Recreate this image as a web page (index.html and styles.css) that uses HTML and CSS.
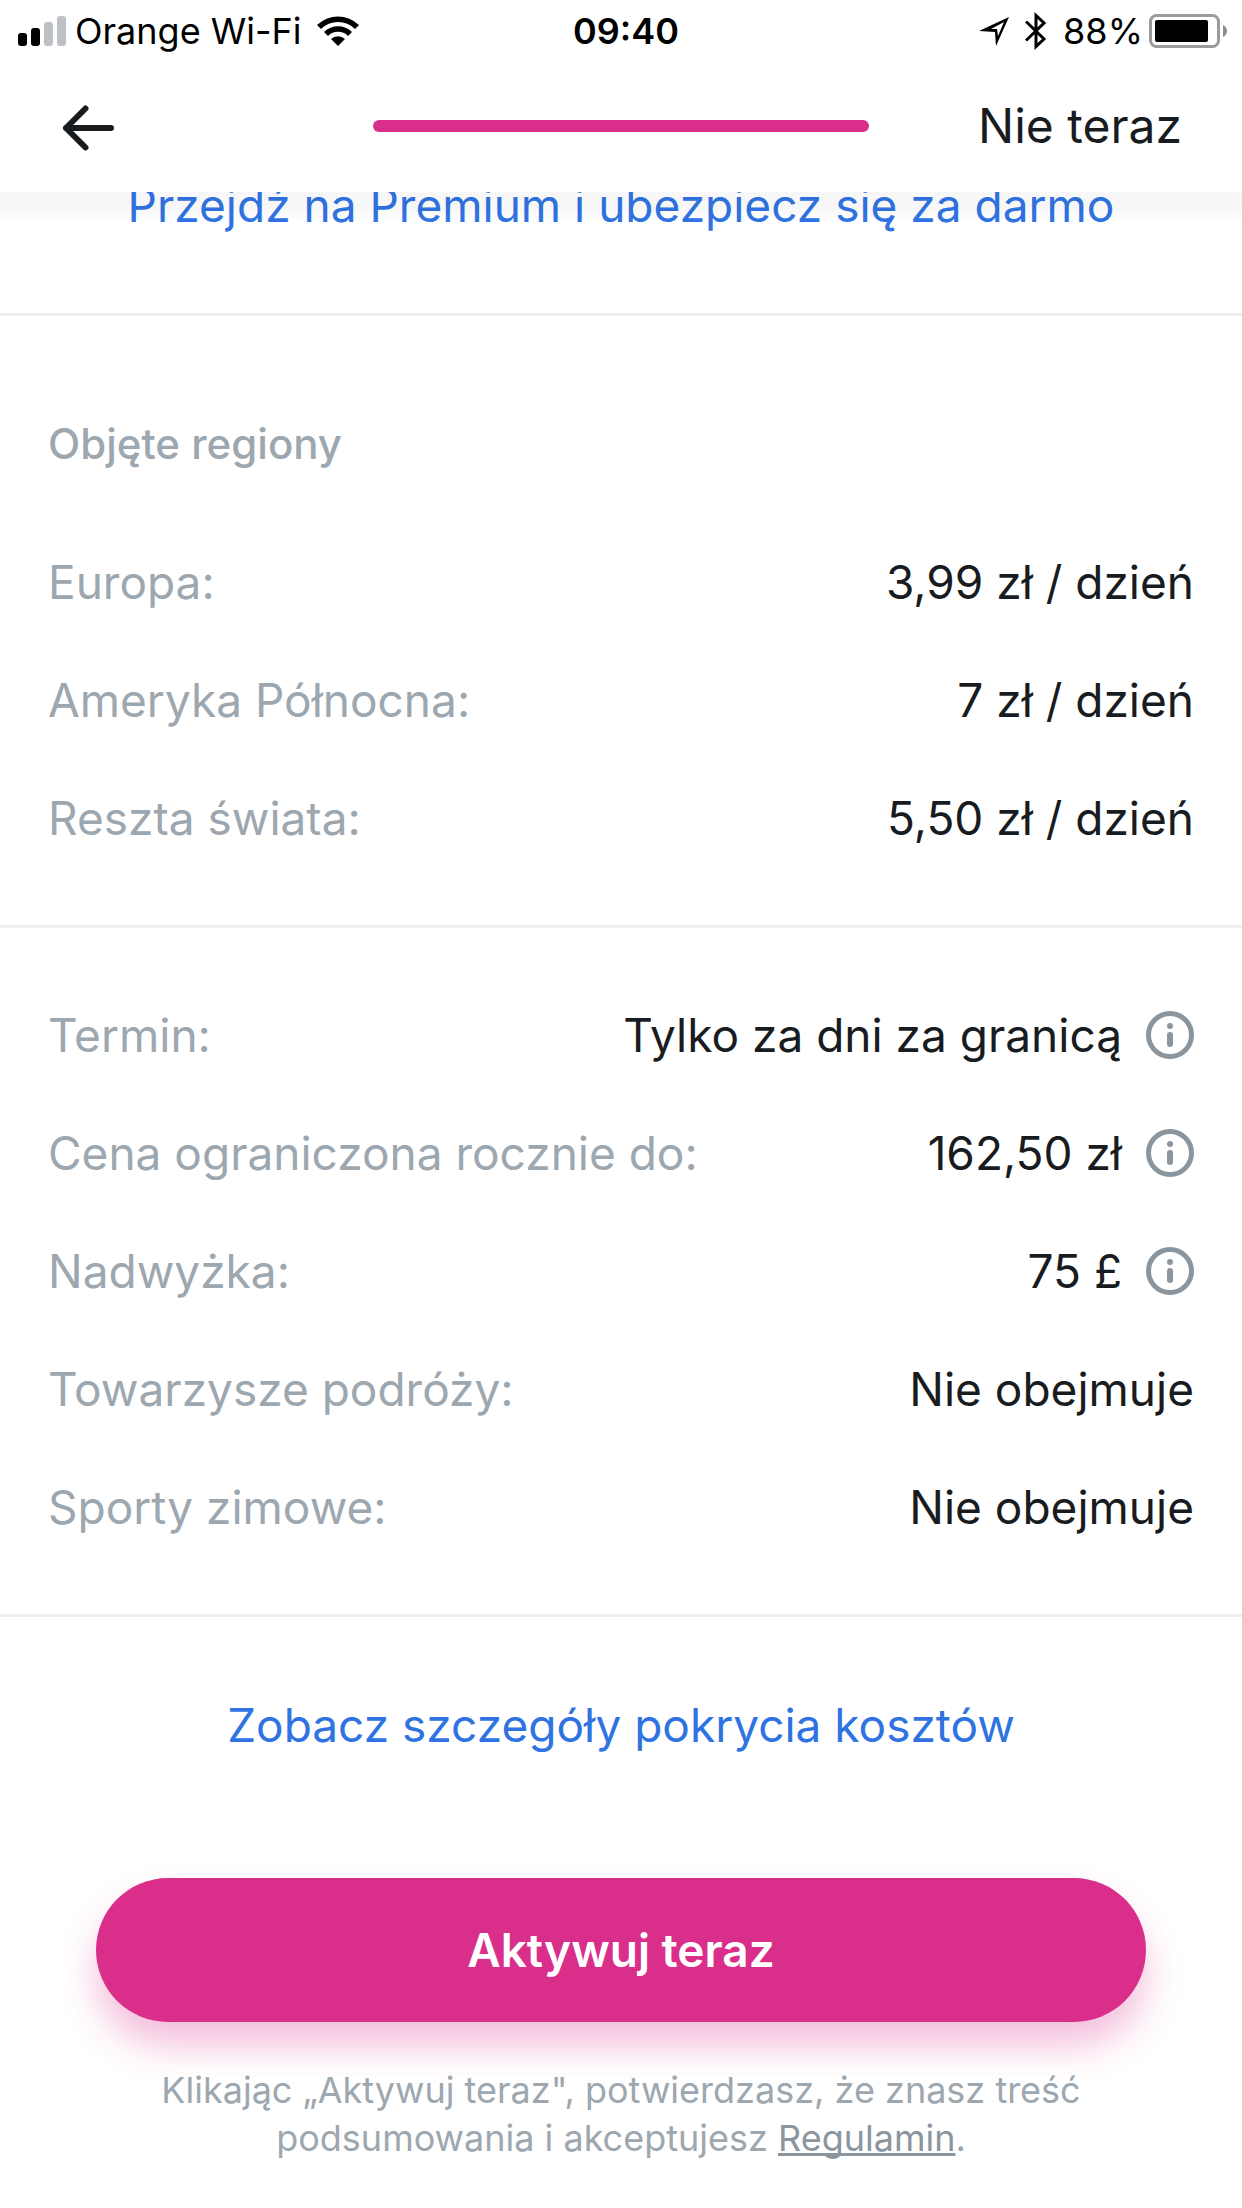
FILE: index.html
```html
<!DOCTYPE html>
<html lang="pl">
<head>
    <meta charset="UTF-8">
    <meta name="viewport" content="width=device-width, initial-scale=1.0">
    <title>Ubezpieczenie</title>
    <link rel="stylesheet" href="styles.css">
</head>
<body>
    <header class="top">
        <div class="status-bar">
            <div class="status-left">
                <svg class="signal" width="48" height="30" viewBox="0 0 48 30" aria-hidden="true">
                    <rect x="0" y="17" width="9" height="13" rx="3"/>
                    <rect x="13" y="12" width="9" height="18" rx="3"/>
                    <rect class="off" x="26" y="6" width="9" height="24" rx="3"/>
                    <rect class="off" x="39" y="0" width="9" height="30" rx="3"/>
                </svg>
                <span class="carrier">Orange Wi-Fi</span>
                <svg class="wifi" width="42" height="30" viewBox="0 0 42 30" aria-hidden="true">
                    <path d="M0 9 A30 30 0 0 1 42 9 L38 13 A24 24 0 0 0 4 13 Z"/>
                    <path d="M7 16 A20 20 0 0 1 35 16 L31 20 A14 14 0 0 0 11 20 Z"/>
                    <path d="M14 23 A10 10 0 0 1 28 23 L21 30 Z"/>
                </svg>
            </div>
            <time class="clock">09:40</time>
            <div class="status-right">
                <svg width="30" height="30" viewBox="0 0 30 30" aria-hidden="true">
                    <path fill-rule="evenodd" d="M0 15 L30 1 L17 30 L16 16 Z M12 13 L18 13 L19 20 L25 6 Z"/>
                </svg>
                <svg class="bluetooth" width="22" height="38" viewBox="0 0 22 38" aria-hidden="true">
                    <path d="M1 9.500 L19 27 L11 34.500 V3.500 L19 11 L1 28.500"/>
                </svg>
                <span class="percent">88%</span>
                <svg width="85" height="34" viewBox="0 0 85 34" aria-hidden="true">
                    <rect class="shell" x="1.500" y="1.500" width="68" height="31" rx="6"/>
                    <rect x="6" y="6" width="53" height="22" rx="2"/>
                    <path class="nub" d="M74 11 Q78 13 78 17 Q78 21 74 23 Z"/>
                </svg>
            </div>
        </div>
        <nav class="nav-bar">
            <button class="back" type="button" aria-label="Wstecz">
                <svg width="52" height="50" viewBox="0 0 52 50" aria-hidden="true">
                    <path d="M49 27 H4 M23.500 7.500 L4 27 L23.500 46.500"/>
                </svg>
            </button>
            <div class="progress"></div>
            <button class="skip" type="button">Nie teraz</button>
        </nav>
    </header>

    <main>
        <section class="promo">
            <a class="link" href="#">Przejdź na Premium i ubezpiecz się za darmo</a>
        </section>

        <section class="details">
            <h2>Objęte regiony</h2>
            <dl>
                <div class="row"><dt>Europa:</dt><dd>3,99 zł / dzień</dd></div>
                <div class="row"><dt>Ameryka Północna:</dt><dd>7 zł / dzień</dd></div>
                <div class="row"><dt>Reszta świata:</dt><dd>5,50 zł / dzień</dd></div>
            </dl>
        </section>

        <section class="details">
            <dl>
                <div class="row">
                    <dt>Termin:</dt>
                    <dd>Tylko za dni za granicą
                        <button class="info" type="button" aria-label="Informacje: termin">
                            <svg width="48" height="48" viewBox="0 0 48 48" aria-hidden="true">
                                <circle class="ring" cx="24" cy="24" r="21.500"/>
                                <circle cx="24" cy="15" r="3"/>
                                <rect x="21" y="21" width="6" height="15" rx="3"/>
                            </svg>
                        </button>
                    </dd>
                </div>
                <div class="row">
                    <dt>Cena ograniczona rocznie do:</dt>
                    <dd>162,50 zł
                        <button class="info" type="button" aria-label="Informacje: cena">
                            <svg width="48" height="48" viewBox="0 0 48 48" aria-hidden="true">
                                <circle class="ring" cx="24" cy="24" r="21.500"/>
                                <circle cx="24" cy="15" r="3"/>
                                <rect x="21" y="21" width="6" height="15" rx="3"/>
                            </svg>
                        </button>
                    </dd>
                </div>
                <div class="row">
                    <dt>Nadwyżka:</dt>
                    <dd>75 £
                        <button class="info" type="button" aria-label="Informacje: nadwyżka">
                            <svg width="48" height="48" viewBox="0 0 48 48" aria-hidden="true">
                                <circle class="ring" cx="24" cy="24" r="21.500"/>
                                <circle cx="24" cy="15" r="3"/>
                                <rect x="21" y="21" width="6" height="15" rx="3"/>
                            </svg>
                        </button>
                    </dd>
                </div>
                <div class="row"><dt>Towarzysze podróży:</dt><dd>Nie obejmuje</dd></div>
                <div class="row"><dt>Sporty zimowe:</dt><dd>Nie obejmuje</dd></div>
            </dl>
        </section>

        <section class="activate">
            <a class="link" href="#">Zobacz szczegóły pokrycia kosztów</a>
            <button class="primary" type="button">Aktywuj teraz</button>
            <p class="terms">Klikając „Aktywuj teraz", potwierdzasz, że znasz treść podsumowania i akceptujesz <a href="#">Regulamin</a>.</p>
        </section>
    </main>
</body>
</html>
```
FILE: styles.css
```css
* {
    box-sizing: border-box;
}

body {
    margin: 0;
    background-color: #fff;
    color: #191c1f;
    font-family: Inter, "Liberation Sans", sans-serif;
    font-size: 46px;
    line-height: 58px;
}

button {
    padding: 0;
    border: none;
    background: none;
    color: inherit;
    font: inherit;
    cursor: pointer;
}

svg {
    display: block;
    flex: none;
}

/* Header */
.top {
    position: sticky;
    top: 0;
    z-index: 1;
    background-color: #fff;
}

.top::after {
    content: "";
    position: absolute;
    top: 100%;
    left: 0;
    right: 0;
    height: 30px;
    background: linear-gradient(rgba(0, 0, 0, 0.03) 50%, rgba(0, 0, 0, 0));
    pointer-events: none;
}

.status-bar {
    display: grid;
    grid-template-columns: 1fr auto 1fr;
    align-items: center;
    height: 62px;
    padding: 0 8px 0 18px;
    color: #000;
    font-size: 36px;
}

.status-left,
.status-right {
    display: flex;
    align-items: center;
}

.status-right {
    justify-content: flex-end;
}

.signal .off {
    fill: #bdc1c6;
}

.carrier {
    margin: 0 16px 0 9px;
}

.clock {
    font-weight: 600;
}

.bluetooth {
    margin: 0 16px;
}

.bluetooth path {
    fill: none;
    stroke: #000;
    stroke-width: 3;
}

.percent {
    margin-right: 6px;
}

.shell {
    fill: none;
    stroke: #9b9b9e;
    stroke-width: 3;
}

.nub {
    fill: #8c8c8f;
}

.nav-bar {
    display: grid;
    grid-template-columns: 30% 1fr 30%;
    align-items: center;
    height: 130px;
    padding-bottom: 2px;
}

.back {
    justify-self: start;
    margin-left: 62px;
}

.back path {
    fill: none;
    stroke: #191c1f;
    stroke-width: 6;
    stroke-linecap: round;
    stroke-linejoin: round;
}

.progress {
    height: 12px;
    border-radius: 6px;
    background-color: #d92e8a;
}

.skip {
    justify-self: end;
    margin-right: 60px;
    font-size: 48px;
}

/* Content */
.link {
    color: #2f73e3;
    text-align: center;
    text-decoration: none;
}

/* starts partly scrolled under the header */
.promo {
    margin-top: -16px;
    padding-bottom: 79px;
    border-bottom: 3px solid #eee;
    text-align: center;
}

.details {
    padding: 48px;
    border-bottom: 3px solid #eee;
}

h2 {
    margin: 0;
    color: #9da7af;
    font-size: 42px;
    font-weight: 500;
    line-height: 159px;
}

dl,
dd {
    margin: 0;
}

.row {
    display: flex;
    align-items: center;
    justify-content: space-between;
    height: 118px;
}

dt {
    color: #9da7af;
}

dd {
    display: flex;
    align-items: center;
    gap: 24px;
}

.info {
    fill: #8b959e;
}

.ring {
    fill: none;
    stroke: #8b959e;
    stroke-width: 5;
}

.activate {
    display: flex;
    flex-direction: column;
    padding: 79px 96px 32px;
}

.primary {
    height: 144px;
    margin: 124px 0 44px;
    border-radius: 72px;
    background-color: #d92e8a;
    box-shadow: 0 24px 36px rgba(217, 46, 138, 0.3);
    color: #fff;
    font-weight: 600;
}

.terms {
    margin: 0 48px;
    color: #9da7af;
    font-size: 36px;
    line-height: 48px;
    text-align: center;
}

.terms a {
    color: #8b959e;
    text-decoration-thickness: 3px;
    text-decoration-skip-ink: none;
}
```
